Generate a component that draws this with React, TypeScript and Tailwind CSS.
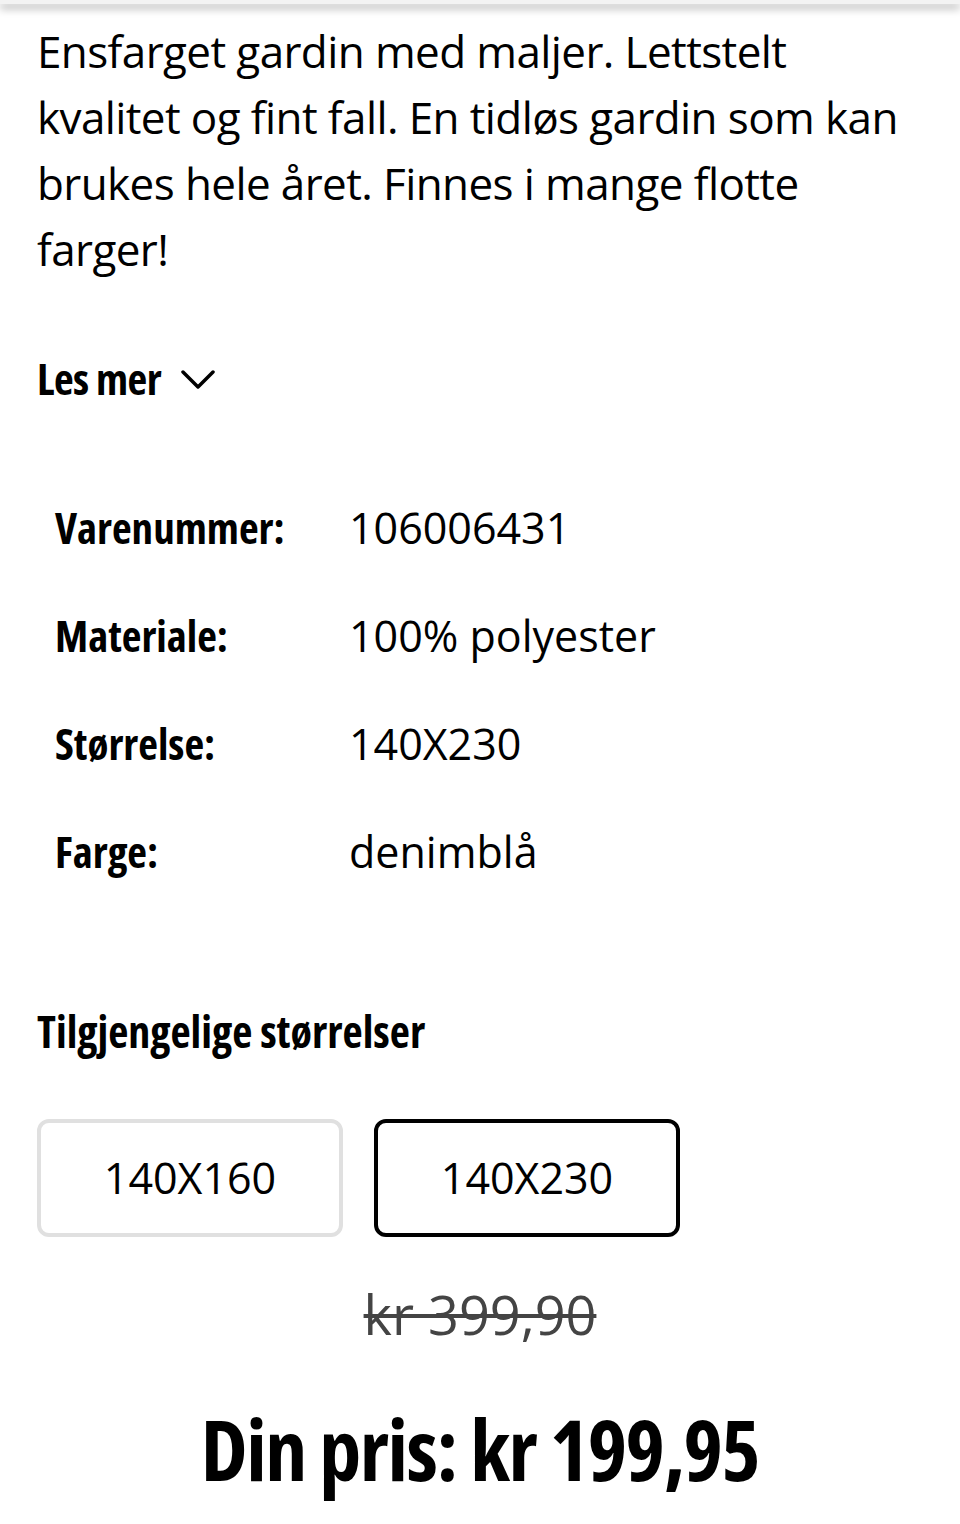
const rows: [string, string][] = [
  ["Varenummer:", "106006431"],
  ["Materiale:", "100% polyester"],
  ["Størrelse:", "140X230"],
  ["Farge:", "denimblå"],
];

export default function App() {
  return (
    <div className="min-h-[1524px] bg-white text-black font-['Open_Sans',sans-serif]">
      <div className="h-[4px] bg-[#f3f3f3] shadow-[0_4px_8px_rgba(0,0,0,0.4)]" />
      <div className="px-[37px] pt-[14px]">
        <p className="text-[44px] leading-[66px] whitespace-nowrap tracking-[-0.6px]">
          <span className="block">Ensfarget gardin med maljer. Lettstelt</span>
          <span className="block">kvalitet og fint fall. En tidløs gardin som kan</span>
          <span className="block">brukes hele året. Finnes i mange flotte</span>
          <span className="block">farger!</span>
        </p>

        <div className="mt-[75px] flex items-center gap-[20px]">
          <span className="text-[43px] leading-[43px] font-bold font-stretch-condensed tracking-[-0.5px]">Les mer</span>
          <svg width="34" height="20" viewBox="0 0 34 20" className="mt-[2px]">
            <polyline points="2,2 17,17 32,2" fill="none" stroke="#000" strokeWidth="3.5" strokeLinecap="round" strokeLinejoin="round" />
          </svg>
        </div>

        <div className="mt-[74px] pl-[18px]">
          {rows.map(([k, v]) => (
            <div key={k} className="flex items-baseline h-[108px] leading-[108px]">
              <span className="w-[294px] shrink-0 text-[43px] font-bold font-stretch-condensed">{k}</span>
              <span className="text-[43px]">{v}</span>
            </div>
          ))}
        </div>

        <h2 className="mt-[103px] text-[44px] leading-[44px] font-bold font-stretch-condensed">Tilgjengelige størrelser</h2>

        <div className="mt-[66px] flex gap-[31px]">
          <button className="w-[306px] h-[118px] rounded-[12px] border-[4px] border-[#e0e0e0] bg-white text-[43px] flex items-center justify-center">
            140X160
          </button>
          <button className="w-[306px] h-[118px] rounded-[12px] border-[4px] border-black bg-white text-[43px] flex items-center justify-center">
            140X230
          </button>
        </div>
      </div>

      <div className="mt-[50px] text-center">
        <span className="text-[54px] leading-[54px] text-[#444] line-through decoration-[4px] decoration-[#444]">kr 399,90</span>
      </div>

      <div className="mt-[66px] text-center text-[84px] leading-[84px] font-bold font-stretch-condensed tracking-[-1.5px]">
        Din pris: kr 199,95
      </div>
    </div>
  );
}
